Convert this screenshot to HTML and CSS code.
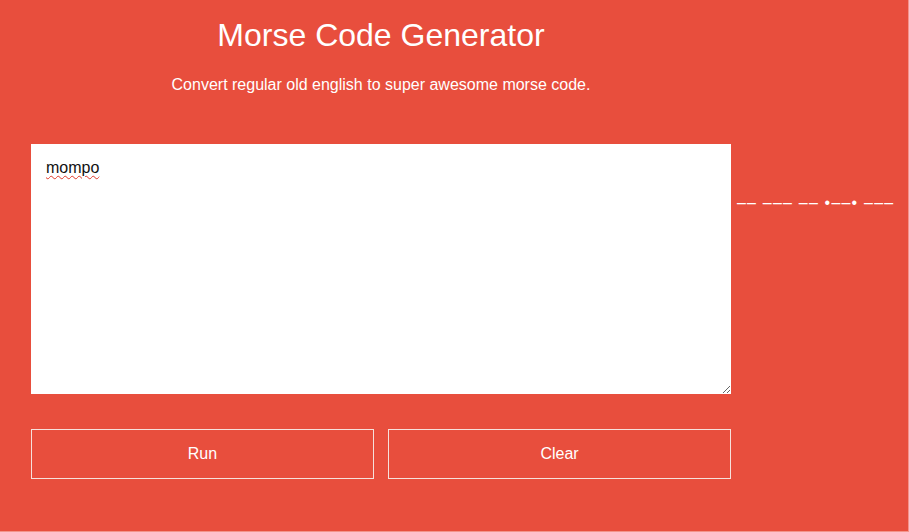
FILE: index.html
```html
<!DOCTYPE html>
<html>
<head>
<meta charset="utf-8">
<link rel="stylesheet" href="styles.css">
</head>
<body>
<div class="frame">
  <div class="page">
    <header class="header">
      <h1 class="title">Morse Code Generator</h1>
      <p class="subtitle">Convert regular old english to super awesome morse code.</p>
    </header>
    <div class="work">
      <textarea class="input" spellcheck="false">mompo</textarea>
      <div class="output">–– ––– –– •––• –––</div>
    </div>
    <div class="actions">
      <button class="btn">Run</button>
      <button class="btn">Clear</button>
    </div>
  </div>
</div>
</body>
</html>
```

FILE: styles.css
```css
html, body {
  margin: 0;
  padding: 0;
  height: 100%;
  background: #e84e3d;
}
body {
  font-family: "Liberation Sans", Arial, sans-serif;
  color: #fff;
}
.frame {
  box-sizing: border-box;
  height: 100%;
  border-right: 1px solid #f3948a;
  border-bottom: 1px solid #f3948a;
  overflow: hidden;
}
.page {
  padding-left: 31px;
}
.header {
  width: 700px;
  text-align: center;
  padding-top: 17px;
}
.title {
  margin: 0;
  font-size: 32px;
  font-weight: normal;
  line-height: 37px;
}
.subtitle {
  margin: 21px 0 0;
  font-size: 16px;
  line-height: 20px;
}
.work {
  display: flex;
  align-items: flex-start;
  margin-top: 49px;
}
.input {
  box-sizing: border-box;
  width: 700px;
  height: 250px;
  margin: 0;
  border: none;
  padding: 15px 15px;
  font-family: "Liberation Sans", Arial, sans-serif;
  font-size: 16px;
  line-height: 18px;
  color: #111;
  background: #fff;
  resize: both;
  outline: none;
  text-decoration: underline wavy #e0392a;
  text-decoration-thickness: 1px;
  text-underline-offset: 2px;
}
.output {
  margin-left: 6px;
  margin-top: 50px;
  font-size: 16px;
  line-height: 18px;
  letter-spacing: 1.2px;
  white-space: nowrap;
  color: #fff;
}
.actions {
  display: flex;
  gap: 14px;
  width: 700px;
  margin-top: 35px;
}
.btn {
  flex: 1;
  height: 50px;
  box-sizing: border-box;
  background: transparent;
  border: 1px solid #f6e1dc;
  color: #fff;
  font-family: "Liberation Sans", Arial, sans-serif;
  font-size: 16px;
  cursor: pointer;
}
```
